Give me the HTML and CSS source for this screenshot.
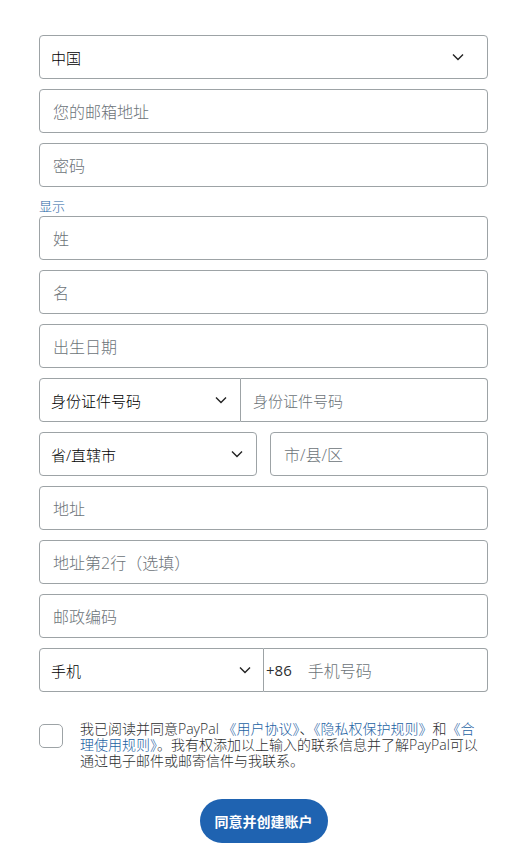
FILE: index.html
```html
<!DOCTYPE html>
<html lang="zh-CN">
<head>
<meta charset="utf-8">
<link rel="stylesheet" href="styles.css">
</head>
<body>
<form class="form">
  <div class="field select"><span class="value">中国</span><svg class="chev" viewBox="0 0 12 8"><path d="M1 1.5 L6 6.5 L11 1.5" fill="none" stroke="#222" stroke-width="1.4"/></svg></div>
  <div class="field"><span class="ph">您的邮箱地址</span></div>
  <div class="field"><span class="ph">密码</span></div>
  <a class="show">显示</a>
  <div class="field"><span class="ph">姓</span></div>
  <div class="field"><span class="ph">名</span></div>
  <div class="field"><span class="ph">出生日期</span></div>
  <div class="row joined">
    <div class="field select id-sel"><span class="value">身份证件号码</span><svg class="chev" viewBox="0 0 12 8"><path d="M1 1.5 L6 6.5 L11 1.5" fill="none" stroke="#222" stroke-width="1.4"/></svg></div>
    <div class="field grow right"><span class="ph small">身份证件号码</span></div>
  </div>
  <div class="row split">
    <div class="field select prov"><span class="value">省/直辖市</span><svg class="chev" viewBox="0 0 12 8"><path d="M1 1.5 L6 6.5 L11 1.5" fill="none" stroke="#222" stroke-width="1.4"/></svg></div>
    <div class="field grow"><span class="ph">市/县/区</span></div>
  </div>
  <div class="field"><span class="ph">地址</span></div>
  <div class="field"><span class="ph">地址第2行（选填）</span></div>
  <div class="field"><span class="ph">邮政编码</span></div>
  <div class="row joined">
    <div class="field select phone-sel"><span class="value">手机</span><svg class="chev" viewBox="0 0 12 8"><path d="M1 1.5 L6 6.5 L11 1.5" fill="none" stroke="#222" stroke-width="1.4"/></svg></div>
    <div class="field grow right tel"><span class="code">+86</span><span class="ph">手机号码</span></div>
  </div>
  <div class="terms">
    <span class="box"></span>
    <p>我已阅读并同意PayPal <a>《用户协议》</a>、<a>《隐私权保护规则》</a>和<a>《合理使用规则》</a>。我有权添加以上输入的联系信息并了解PayPal可以通过电子邮件或邮寄信件与我联系。</p>
  </div>
  <div class="actions"><button type="button" class="btn">同意并创建账户</button></div>
</form>
</body>
</html>
```
FILE: styles.css
```css
html, body { margin: 0; padding: 0; background: #fff; }
body { font-family: "Open Sans", "Noto Sans CJK SC", sans-serif; color: #2c2e2f; }
.form { width: 449px; margin: 0 0 0 39px; padding-top: 35px; display: flex; flex-direction: column; }
.field { box-sizing: border-box; height: 44px; border: 1px solid #9da3a6; border-radius: 4px; display: flex; align-items: center; padding: 0 13px; margin-bottom: 10px; background: #fff; }
.ph { color: #6c7378; font-size: 16px; font-weight: 300; }
.ph.small { font-size: 15px; }
.select { padding: 0 11px; justify-content: space-between; }
.value { color: #000; font-size: 15px; font-weight: 300; }
.chev { width: 12px; height: 8px; margin-right: 12px; }
.show { color: #1c62a3; font-size: 13px; line-height: 19px; margin: 0; text-decoration: none; font-weight: 300; }
.row { display: flex; }
.row .field { margin-bottom: 10px; }
.grow { flex: 1; }
.joined .select { border-radius: 4px 0 0 4px; }
.joined .right { border-radius: 0 4px 4px 0; border-left: 0; padding-left: 12px; }
.id-sel { width: 202px; }
.id-sel .chev { margin-right: 2px; }
.split { gap: 13px; }
.prov { width: 218px; }
.prov .chev { margin-right: 2px; }
.phone-sel { width: 225px; }
.phone-sel .chev { margin-right: 1px; }
.joined .tel { padding-left: 2px; }
.tel .code { color: #2c2e2f; font-size: 15px; margin-right: 16px; }
.terms { display: flex; margin-top: 19px; }
.box { flex: none; width: 24px; height: 24px; box-sizing: border-box; border: 1px solid #9da3a6; border-radius: 5px; margin-top: 3px; }
.terms p { margin: 0 0 0 17px; font-size: 14px; line-height: 16px; color: #2c2e2f; font-weight: 300; }
.terms a { color: #1c62a3; }
.actions { display: flex; justify-content: center; margin-top: 30px; }
.btn { width: 128px; height: 44px; border: 0; border-radius: 22px; background: #1f63b1; color: #fff; font-family: "Open Sans", "Noto Sans CJK SC", sans-serif; font-weight: 700; font-size: 14px; }
```
